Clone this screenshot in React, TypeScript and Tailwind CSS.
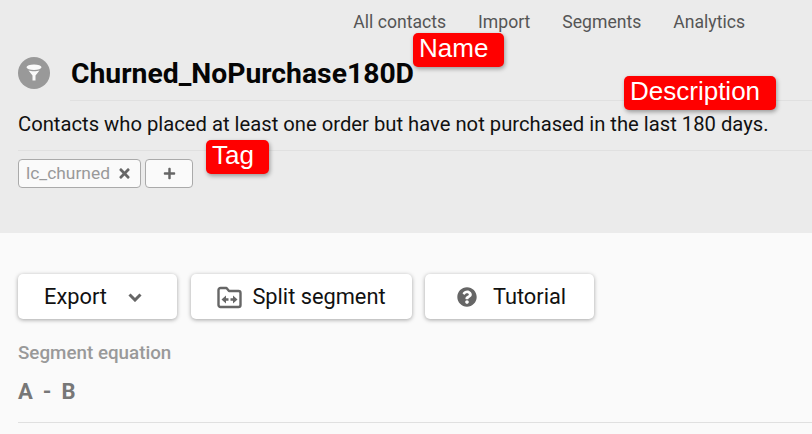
import { FaPlus, FaQuestionCircle, FaTimes } from "react-icons/fa";

const NAV = ["All contacts", "Import", "Segments", "Analytics"];

function Callout({ label, className }: { label: string; className: string }) {
  return (
    <div
      className={`absolute h-[34px] rounded-[5px] bg-[#ff0000] pl-[6px] text-[26px] leading-[30px] text-white shadow-[1px_2px_4px_rgba(0,0,0,0.35)] font-['Liberation_Sans',sans-serif] ${className}`}
    >
      {label}
    </div>
  );
}

function FunnelBadge() {
  return (
    <div className="flex h-8 w-8 shrink-0 items-center justify-center rounded-full bg-[#999999]">
      <svg width="16" height="17" viewBox="0 0 16 17" fill="#fafafa">
        <ellipse cx="8" cy="3.200" rx="7.500" ry="2.800" />
        <path d="M2.500 6.500c2.500 1 8.500 1 11 0L9.500 11.500V16.500h-3V11.500z" />
      </svg>
    </div>
  );
}

function SplitIcon() {
  return (
    <svg width="25" height="23" viewBox="0 0 25 23" fill="none">
      <path
        d="M1.500 4a2 2 0 0 1 2-2h6l2.500 3h9.500a2 2 0 0 1 2 2v12a2 2 0 0 1-2 2h-18a2 2 0 0 1-2-2z"
        stroke="#666666"
        strokeWidth="2.400"
        strokeLinejoin="round"
      />
      <path d="M4.500 13.500l4.500-4v2.700h2.500v2.600H9v2.700zM20.500 13.500l-4.500-4v2.700h-2.500v2.600H16v2.700z" fill="#666666" />
    </svg>
  );
}

function Chevron() {
  return (
    <svg width="14" height="9" viewBox="0 0 14 9" fill="none">
      <path d="M1.500 1.500L7 7l5.500-5.500" stroke="#666666" strokeWidth="3" />
    </svg>
  );
}

function ActionButton({ className, children }: { className: string; children: React.ReactNode }) {
  return (
    <button
      className={`flex h-[45px] items-center justify-center rounded-[5px] bg-white pt-px text-[21.8px] text-[#111111] shadow-[0_1px_4px_rgba(0,0,0,0.35)] ${className}`}
    >
      {children}
    </button>
  );
}

export default function App() {
  return (
    <div className="relative h-[434px] w-[812px] overflow-hidden bg-[#fafafa] font-['Roboto',sans-serif]">
      <header className="h-[233px] bg-[#ebebeb]">
        <nav className="flex h-[44px] items-center justify-end gap-[32px] pr-[67px] text-[17.6px] text-[#555555]">
          {NAV.map((item) => (
            <a key={item}>{item}</a>
          ))}
        </nav>

        <div className="flex h-[57px] items-center pl-[18px]">
          <FunnelBadge />
          <div className="ml-[20px] flex h-[57px] flex-1 items-center border-b border-[#e0e0e0] pl-px pt-[4px]">
            <h1 className="text-[28.3px] font-bold leading-none text-[#050505]">Churned_NoPurchase180D</h1>
          </div>
        </div>

        <div className="ml-[18px] flex h-[50px] items-center border-b border-[#e0e0e0] pb-[2px] text-[20.23px] text-[#111111]">
          Contacts who placed at least one order but have not purchased in the last 180 days.
        </div>

        <div className="ml-[18px] mt-[8px] flex gap-[4px]">
          <div className="flex h-[29px] w-[123px] items-center rounded-[4px] border border-[#aaaaaa] bg-[#fafafa] pl-[7px] text-[17.4px] text-[#999999]">
            lc_churned
            <FaTimes className="ml-[8px] h-[15px] w-[13px] text-[#666666]" />
          </div>
          <div className="flex h-[29px] w-[48px] items-center justify-center rounded-[4px] border border-[#aaaaaa] bg-[#fafafa]">
            <FaPlus className="h-[13px] w-[13px] text-[#666666]" />
          </div>
        </div>
      </header>

      <main className="pl-[18px] pt-[41px]">
        <div className="flex">
          <ActionButton className="w-[159px] gap-[21px] pr-[9px]">
            Export
            <Chevron />
          </ActionButton>
          <ActionButton className="ml-[14px] w-[221px] gap-[10px]">
            <SplitIcon />
            Split segment
          </ActionButton>
          <ActionButton className="ml-[13px] w-[169px] gap-[16px] pl-[4px]">
            <FaQuestionCircle className="h-[20px] w-[20px] text-[#666666]" />
            Tutorial
          </ActionButton>
        </div>

        <div className="mt-[22px] text-[18.800px] font-medium leading-[24px] text-[#999999]">Segment equation</div>
        <div className="mt-[15px] flex h-[43px] items-start gap-[10px] border-b border-[#e0e0e0] text-[22px] font-bold leading-[24px] text-[#777777]">
          <span>A</span>
          <span>-</span>
          <span>B</span>
        </div>
      </main>

      <Callout label="Name" className="left-[413px] top-[33px] w-[91px]" />
      <Callout label="Description" className="left-[624px] top-[76px] w-[152px]" />
      <Callout label="Tag" className="left-[206px] top-[140px] w-[63px]" />
    </div>
  );
}
